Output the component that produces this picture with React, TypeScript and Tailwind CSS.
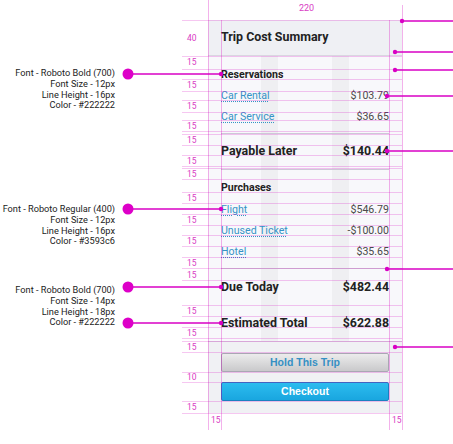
const guideRows = [20, 56, 69, 79, 91, 100, 112, 120, 131, 134, 145, 155, 166, 168, 179, 192, 203, 214, 225, 235, 246, 257, 268, 280, 305, 316, 327, 338, 341, 352, 372, 382, 401, 413];

const gapLabels = [
  { y: 38, t: '40' },
  { y: 62, t: '15' },
  { y: 85, t: '15' },
  { y: 106, t: '15' },
  { y: 126, t: '15' },
  { y: 140, t: '15' },
  { y: 161, t: '15' },
  { y: 174, t: '15' },
  { y: 198, t: '15' },
  { y: 220, t: '15' },
  { y: 241, t: '15' },
  { y: 263, t: '15' },
  { y: 275, t: '15' },
  { y: 311, t: '15' },
  { y: 333, t: '15' },
  { y: 347, t: '15' },
  { y: 377, t: '10' },
  { y: 407, t: '15' },
];

// left callouts: big dot -> small dot on the element
const leftPins = [74, 209, 287, 323];
// right callouts: [x of dot, y]
const rightPins: [number, number][] = [[402, 21], [395, 52], [395, 70], [387, 96], [387, 151], [387, 269], [395, 347]];

const Spec = ({ lines, top }: { lines: string[]; top: number }) => (
  <div className="absolute right-[338px] text-right text-[9.2px] leading-[10.8px] text-[#222222] whitespace-nowrap" style={{ top }}>
    {lines.map((l) => (
      <div key={l}>{l}</div>
    ))}
  </div>
);

const Item = ({ label, amount }: { label: string; amount: string }) => (
  <div className="flex h-[14px] items-center justify-between text-[10.6px] leading-[14px]">
    <a href="#" className="text-[#3593c6] underline decoration-dotted decoration-[#3593c6] underline-offset-2">{label}</a>
    <span className="text-[#4a4a4a]">{amount}</span>
  </div>
);

const Total = ({ label, amount, className = '' }: { label: string; amount: string; className?: string }) => (
  <div className={`flex h-[16px] items-center justify-between text-[12.4px] font-bold leading-[16px] text-[#222222] ${className}`}>
    <span>{label}</span>
    <span>{amount}</span>
  </div>
);

const Section = ({ title, className = '' }: { title: string; className?: string }) => (
  <div className={`h-[14px] text-[10.6px] font-bold leading-[14px] text-[#222222] ${className}`}>{title}</div>
);

const Panel = () => (
  <div className="relative w-[194px] bg-[#f8f8fb]">
    {/* column guides */}
    <div className="absolute top-0 bottom-0 left-[53px] w-[17px] bg-black/[0.035]" />
    <div className="absolute top-0 bottom-0 left-[124px] w-[17px] bg-black/[0.035]" />

    <div className="relative flex h-[36px] items-center border-b border-[#d9d6e0] bg-[#eff0f4] px-[13px] text-[12.4px] font-bold text-[#222222]">
      Trip Cost Summary
    </div>

    <div className="relative flex flex-col px-[13px] pb-[10px]">
      <Section title="Reservations" className="mt-[12px]" />
      <div className="mt-[7px]"><Item label="Car Rental" amount="$103.79" /></div>
      <div className="mt-[7px]"><Item label="Car Service" amount="$36.65" /></div>
      <div className="mt-[9px] h-px bg-[#cdc8d6]" />
      <Total label="Payable Later" amount="$140.44" className="mt-[9px]" />
      <div className="mt-[10px] h-px bg-[#cdc8d6]" />
      <Section title="Purchases" className="mt-[11px]" />
      <div className="mt-[8px]"><Item label="Flight" amount="$546.79" /></div>
      <div className="mt-[7px]"><Item label="Unused Ticket" amount="-$100.00" /></div>
      <div className="mt-[7px]"><Item label="Hotel" amount="$35.65" /></div>
      <div className="mt-[9px] h-px bg-[#cdc8d6]" />
      <Total label="Due Today" amount="$482.44" className="mt-[10px]" />
      <Total label="Estimated Total" amount="$622.88" className="mt-[20px]" />
    </div>

    <div className="relative flex flex-col gap-[10px] border-t border-[#d9d6e0] bg-[#f0f1f4] px-[13px] pt-[11px] pb-[12px] font-['Liberation_Sans',Arial,sans-serif]">
      <button className="h-[19px] rounded-[2px] border border-[#aaa6b4] bg-gradient-to-b from-[#ececec] to-[#c9c9cb] text-[10.5px] font-bold text-[#3590c4]">
        Hold This Trip
      </button>
      <button className="h-[19px] rounded-[2px] border border-[#1b7fc0] bg-gradient-to-b from-[#2cbcef] to-[#19a6df] text-[10.5px] font-bold text-white">
        Checkout
      </button>
    </div>
  </div>
);

export default function App() {
  return (
    <div className="relative h-[444px] w-[453px] overflow-hidden bg-white font-['Roboto',sans-serif]">
      <div className="ml-[208px] pt-[20px]">
        <Panel />
      </div>

      {/* guide lines */}
      <svg className="pointer-events-none absolute inset-0" width="453" height="444">
        {guideRows.map((y) => (
          <line key={y} x1="182" x2="402" y1={y + 0.5} y2={y + 0.5} stroke="#d600be" strokeOpacity="0.22" />
        ))}
        <line x1="208.5" x2="208.5" y1="0" y2="430" stroke="#d600be" strokeOpacity="0.3" />
        <line x1="221.5" x2="221.5" y1="20" y2="430" stroke="#d600be" strokeOpacity="0.3" />
        <line x1="389.5" x2="389.5" y1="20" y2="430" stroke="#d600be" strokeOpacity="0.3" />
        <line x1="402.5" x2="402.5" y1="5" y2="430" stroke="#d600be" strokeOpacity="0.3" />

        {leftPins.map((y) => (
          <g key={y}>
            <line x1="128" x2="221" y1={y} y2={y} stroke="#d900c4" strokeWidth="1.5" />
            <circle cx="128" cy={y} r="5.5" fill="#dd00c8" />
            <circle cx="221" cy={y} r="2.2" fill="#d900c4" />
          </g>
        ))}
        {rightPins.map(([x, y]) => (
          <g key={y}>
            <line x1={x} x2="453" y1={y} y2={y} stroke="#d900c4" strokeWidth="1.5" />
            <circle cx={x} cy={y} r="2.2" fill="#d900c4" />
          </g>
        ))}
      </svg>

      <span className="absolute left-[299px] top-[2px] text-[9px] text-[#d93cc4]">220</span>
      {gapLabels.map((g) => (
        <span
          key={g.y}
          className="absolute left-[187px] text-[8.5px] leading-[10px] text-[#d93cc4]"
          style={{ top: g.y - 5 }}
        >
          {g.t}
        </span>
      ))}
      <span className="absolute left-[211px] top-[415px] text-[8.5px] leading-[10px] text-[#d93cc4]">15</span>
      <span className="absolute left-[392px] top-[415px] text-[8.5px] leading-[10px] text-[#d93cc4]">15</span>

      <Spec top={68} lines={['Font - Roboto Bold (700)', 'Font Size - 12px', 'Line Height - 16px', 'Color - #222222']} />
      <Spec top={204} lines={['Font - Roboto Regular (400)', 'Font Size - 12px', 'Line Height - 16px', 'Color - #3593c6']} />
      <Spec top={285} lines={['Font - Roboto Bold (700)', 'Font Size - 14px', 'Line Height - 18px', 'Color - #222222']} />
    </div>
  );
}
